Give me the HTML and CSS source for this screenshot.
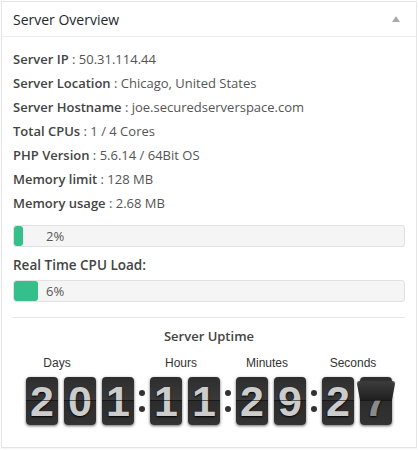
FILE: index.html
```html
<!DOCTYPE html>
<html lang="en">
<head>
    <meta charset="UTF-8">
    <meta name="viewport" content="width=device-width, initial-scale=1.0">
    <title>Server Overview</title>
    <link rel="stylesheet" href="styles.css">
</head>
<body>
    <div class="postbox">
        <div class="postbox-header">
            <h2>Server Overview</h2>
            <span class="toggle-arrow"></span>
        </div>
        <div class="inside">
            <ul class="info-list">
                <li><strong>Server IP</strong> : 50.31.114.44</li>
                <li><strong>Server Location</strong> : Chicago, United States</li>
                <li><strong>Server Hostname</strong> : joe.securedserverspace.com</li>
                <li><strong>Total CPUs</strong> : 1 / 4 Cores</li>
                <li><strong>PHP Version</strong> : 5.6.14 / 64Bit OS</li>
                <li><strong>Memory limit</strong> : 128 MB</li>
                <li><strong>Memory usage</strong> : 2.68 MB</li>
            </ul>
            <div class="progress">
                <span class="progress-fill" style="width: 9px"></span>
                <span class="progress-text">2%</span>
            </div>
            <p class="cpu-title">Real Time CPU Load:</p>
            <div class="progress">
                <span class="progress-fill" style="width: 24px"></span>
                <span class="progress-text">6%</span>
            </div>
            <hr class="divider">
            <h3 class="uptime-title">Server Uptime</h3>
            <div class="clock">
                <div class="clock-group">
                    <span class="clock-label">Days</span>
                    <div class="clock-digits">
                        <span class="digit">2</span>
                        <span class="digit">0</span>
                        <span class="digit">1</span>
                    </div>
                </div>
                <span class="clock-colon"></span>
                <div class="clock-group">
                    <span class="clock-label">Hours</span>
                    <div class="clock-digits">
                        <span class="digit">1</span>
                        <span class="digit">1</span>
                    </div>
                </div>
                <span class="clock-colon"></span>
                <div class="clock-group">
                    <span class="clock-label">Minutes</span>
                    <div class="clock-digits">
                        <span class="digit">2</span>
                        <span class="digit">9</span>
                    </div>
                </div>
                <span class="clock-colon"></span>
                <div class="clock-group">
                    <span class="clock-label">Seconds</span>
                    <div class="clock-digits">
                        <span class="digit">2</span>
                        <span class="digit flipping">7<span class="flap"></span></span>
                    </div>
                </div>
            </div>
        </div>
    </div>
</body>
</html>
```

FILE: styles.css
```css
body {
    margin: 0;
    padding: 1px;
    background: #fff;
    font-family: 'Open Sans', sans-serif;
    color: #555;
}

.postbox {
    border: 1px solid #e5e5e5;
    background: #fff;
    height: 447px;
    box-sizing: border-box;
    box-shadow: 0 1px 1px rgba(0, 0, 0, 0.04);
}

.postbox-header {
    display: flex;
    align-items: center;
    justify-content: space-between;
    height: 34px;
    padding: 0 16px 0 11px;
    border-bottom: 1px solid #eee;
}

.postbox-header h2 {
    margin: 0;
    font-size: 14px;
    font-weight: 400;
    color: #23282d;
}

.toggle-arrow {
    width: 0;
    height: 0;
    border-left: 4px solid transparent;
    border-right: 4px solid transparent;
    border-bottom: 6px solid #aaa;
}

.inside {
    padding: 10px 11px 0 11px;
}

.info-list {
    list-style: none;
    margin: 0;
    padding: 0;
    font-size: 13px;
    line-height: 24px;
}

.info-list strong {
    font-weight: 600;
    color: #444;
}

.progress {
    display: grid;
    align-items: center;
    height: 20px;
    margin-top: 10px;
    border: 1px solid #e2e2e2;
    border-radius: 3px;
    background: #f5f5f5;
}

.progress-fill,
.progress-text {
    grid-area: 1 / 1;
}

.progress-fill {
    height: 100%;
    background: #35bf8b;
    border-radius: 3px;
}

.progress-text {
    padding-left: 32px;
    font-size: 13px;
    color: #555;
}

.cpu-title {
    margin: 8px 0 0;
    font-size: 13.5px;
    font-weight: 600;
    line-height: 20px;
    color: #444;
}

.cpu-title + .progress {
    margin-top: 5px;
}

.divider {
    margin: 15px 0 0;
    border: 0;
    border-top: 1px solid #e5e5e5;
}

.uptime-title {
    margin: 9px 0 0;
    font-size: 13px;
    font-weight: 600;
    line-height: 18px;
    text-align: center;
    color: #444;
}

.clock {
    display: flex;
    justify-content: center;
    align-items: flex-end;
    margin-top: 11px;
}

.clock-group {
    display: flex;
    flex-direction: column;
}

.clock-label {
    width: 62px;
    font-family: 'Liberation Sans', Arial, sans-serif;
    font-size: 12px;
    line-height: 14px;
    text-align: center;
    color: #333;
    margin-bottom: 7px;
}

.clock-digits {
    display: flex;
    gap: 6px;
}

.digit {
    position: relative;
    width: 32px;
    height: 48px;
    border-radius: 4px;
    background: linear-gradient(#2e2e2e, #3a3a3a 50%, #2c2c2c 50%, #333);
    box-shadow: 0 1px 3px rgba(0, 0, 0, 0.6);
    font-family: 'Liberation Sans', Arial, sans-serif;
    font-size: 43px;
    font-weight: 700;
    line-height: 48px;
    text-align: center;
    color: #ccc;
    text-shadow: 0 1px 2px #000;
}

.digit::after {
    content: "";
    position: absolute;
    left: 0;
    right: 0;
    top: 23px;
    height: 1px;
    background: rgba(0, 0, 0, 0.55);
}

.flipping {
    color: #8a8a8a;
}

.flap {
    position: absolute;
    left: 0;
    right: 0;
    top: 4px;
    height: 19px;
    border-radius: 3px 3px 0 0;
    background: linear-gradient(#3c3c3c, #1e1e1e);
    transform-origin: 50% 100%;
    transform: perspective(60px) rotateX(-35deg);
    z-index: 1;
}

.clock-colon {
    position: relative;
    width: 16px;
    height: 48px;
}

.clock-colon::before,
.clock-colon::after {
    content: "";
    position: absolute;
    left: 5px;
    width: 6px;
    height: 6px;
    border-radius: 50%;
    background: #323232;
}

.clock-colon::before {
    top: 13px;
}

.clock-colon::after {
    top: 29px;
}
```
